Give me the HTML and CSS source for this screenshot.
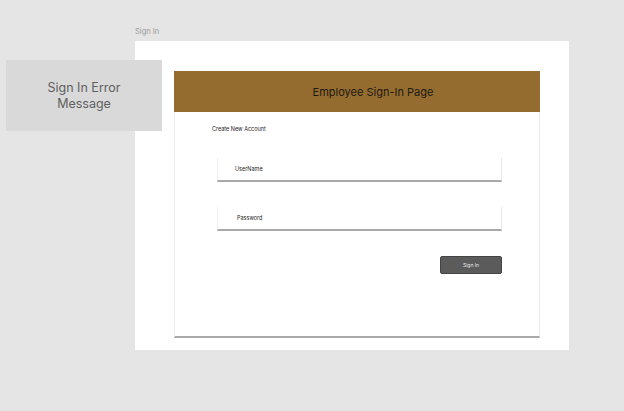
FILE: index.html
```html
<!DOCTYPE html>
<html>
<head>
<meta charset="utf-8">
<link rel="stylesheet" href="styles.css">
</head>
<body>
<div class="canvas">
  <div class="frame-label">Sign In</div>
  <div class="frame">
    <div class="card">
      <div class="card-header">Employee Sign-In Page</div>
      <div class="card-body">
        <div class="create-link">Create New Account</div>
        <div class="field field-user">UserName</div>
        <div class="field field-pass">Password</div>
        <div class="actions"><button class="btn">Sign In</button></div>
      </div>
    </div>
  </div>
  <div class="error-box">Sign In Error<br>Message</div>
</div>
</body>
</html>
```
FILE: styles.css
```css
html, body {
  margin: 0;
  padding: 0;
  background: #e5e5e5;
  font-family: Inter, "Noto Sans", sans-serif;
}
.canvas {
  position: relative;
  width: 624px;
  height: 411px;
  overflow: hidden;
}
.error-box {
  position: absolute;
  z-index: 2;
  left: 6px;
  top: 60px;
  width: 156px;
  height: 71px;
  background: #d9d9d9;
  color: #5f5f5f;
  font-size: 12.5px;
  line-height: 16px;
  display: flex;
  align-items: center;
  justify-content: center;
  text-align: center;
}
.frame-label {
  position: absolute;
  left: 135px;
  top: 27px;
  font-size: 7.5px;
  color: #9a9a9a;
}
.frame {
  position: absolute;
  left: 135px;
  top: 41px;
  width: 434px;
  height: 309px;
  background: #ffffff;
  padding: 30px 0 0 39px;
  box-sizing: border-box;
}
.card {
  width: 366px;
  height: 267px;
  background: #fff;
  box-sizing: border-box;
  border-left: 1px solid #ececec;
  border-right: 1px solid #ececec;
  border-bottom: 2px solid #a9a9a9;
  display: flex;
  flex-direction: column;
}
.card-header {
  height: 41px;
  margin: 0 -1px;
  background: #946c2f;
  color: #1e1a14;
  font-size: 11px;
  display: flex;
  align-items: center;
  justify-content: center;
  padding-left: 32px;
}
.card-body {
  flex: 1;
  padding: 14px 0 0 37px;
  display: flex;
  flex-direction: column;
}
.create-link {
  font-size: 5.5px;
  color: #222;
  line-height: 7px;
}
.field {
  margin-left: 5px;
  width: 285px;
  height: 24px;
  box-sizing: border-box;
  border-left: 1px solid #efefef;
  border-right: 1px solid #e8e8e8;
  border-bottom: 2px solid #a9a9a9;
  font-size: 5.5px;
  color: #222;
  display: flex;
  align-items: center;
  padding-left: 17px;
}
.field-user {
  margin-top: 25px;
}
.field-pass {
  margin-top: 25px;
  padding-left: 19px;
}
.actions {
  margin-left: 5px;
  width: 285px;
  display: flex;
  justify-content: flex-end;
  margin-top: 25px;
}
.btn {
  width: 62px;
  height: 18px;
  background: #5b5b5b;
  border: 1px solid #444;
  border-radius: 2px;
  color: #eaeaea;
  font-family: Inter, "Noto Sans", sans-serif;
  font-size: 5px;
  padding: 0;
}
```
